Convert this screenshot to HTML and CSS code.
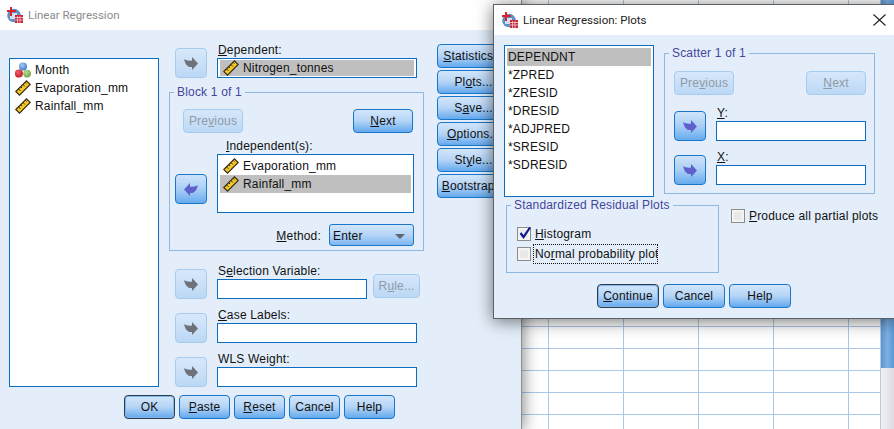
FILE: index.html
```html
<!DOCTYPE html>
<html lang="en">
<head>
  <meta charset="UTF-8">
  <title>Linear Regression</title>
  <link rel="stylesheet" href="styles.css">
</head>
<body>

  <svg class="defs" width="0" height="0">
    <defs>
      <radialGradient id="ball-blue" cx="40%" cy="35%" r="70%"><stop offset="0" stop-color="#a3cbf2"/><stop offset="1" stop-color="#3f7cc8"/></radialGradient>
      <radialGradient id="ball-red" cx="40%" cy="35%" r="70%"><stop offset="0" stop-color="#f0606a"/><stop offset="1" stop-color="#c01824"/></radialGradient>
      <radialGradient id="ball-green" cx="40%" cy="35%" r="70%"><stop offset="0" stop-color="#bcdc94"/><stop offset="1" stop-color="#6f9f44"/></radialGradient>
      <symbol id="i-ruler" viewBox="0 0 16 16">
        <path d="M.8 11.5 L11.5 .8 L15.2 4.5 L4.5 15.2 Z" fill="#f6c52a" stroke="#2f2a14" stroke-width="1.1"/>
        <path d="M3.6 9 L5.4 10.8 M5.8 6.8 L7 8 M8 4.6 L9.8 6.4 M10.2 2.4 L11.4 3.6" stroke="#2f2a14" stroke-width="1"/>
      </symbol>
      <symbol id="i-nominal" viewBox="0 0 16 16">
        <circle cx="8" cy="4.4" r="4" fill="url(#ball-blue)"/>
        <circle cx="3.9" cy="11.6" r="4" fill="url(#ball-red)"/>
        <circle cx="12.1" cy="11.6" r="3.9" fill="url(#ball-green)"/>
      </symbol>
      <symbol id="i-app" viewBox="0 0 16 16">
        <circle cx="7" cy="8.5" r="6.8" fill="#5c93c4"/>
        <path d="M3 6 H10 V12 H3 Z" fill="#cfe0f0"/>
        <path d="M3 0 H5 V3 H9 V5 H5 V9 H3 V5 H0 V3 H3 Z" fill="#d8232f"/>
        <rect x="8" y="8" width="8" height="8" fill="#c9283a"/>
        <path d="M8 10.5 H16 M8 13 H16 M10.5 9 V16 M13 9 V16" stroke="#f3c6cb" stroke-width=".8"/>
      </symbol>
      <symbol id="i-arrow" viewBox="0 0 14 13">
        <path d="M0 2 C2 3.5 5 4 8 3.5 V0 L14 6.5 L8 13 V10 C4.5 10.5 1.5 8.5 0 2 Z"/>
      </symbol>
      <symbol id="i-check" viewBox="0 0 14 14">
        <path d="M2.5 7 L5.5 11 L12 1.5" fill="none" stroke="#14148c" stroke-width="2.2"/>
      </symbol>
    </defs>
  </svg>

  <div class="sheet">
    <div class="sheet-grid"></div>
    <div class="scrollbar"><div class="scroll-thumb"></div></div>
  </div>

  <!-- main dialog -->
  <div class="window main-window">
    <div class="titlebar inactive">
      <svg class="app-icon"><use href="#i-app"/></svg>
      <span class="title-text">Linear Regression</span>
    </div>
    <div class="dialog-body">
      <div class="main-columns">
        <ul class="listbox source-list">
          <li><svg class="var-icon"><use href="#i-nominal"/></svg>Month</li>
          <li><svg class="var-icon"><use href="#i-ruler"/></svg>Evaporation_mm</li>
          <li><svg class="var-icon"><use href="#i-ruler"/></svg>Rainfall_mm</li>
        </ul>

        <div class="middle-col">
          <div class="var-row">
            <button class="arrow-btn" disabled><svg><use href="#i-arrow"/></svg></button>
            <div class="field wide">
              <label><u>D</u>ependent:</label>
              <div class="textbox"><div class="selected-var"><svg class="var-icon"><use href="#i-ruler"/></svg>Nitrogen_tonnes</div></div>
            </div>
          </div>

          <fieldset class="group block-group">
            <legend>Block 1 of 1</legend>
            <div class="pager">
              <button class="btn nav-btn" disabled>Pre<u>v</u>ious</button>
              <button class="btn nav-btn"><u>N</u>ext</button>
            </div>
            <div class="indep-row">
              <button class="arrow-btn active flip"><svg><use href="#i-arrow"/></svg></button>
              <div class="field">
                <label class="indep-label"><u>I</u>ndependent(s):</label>
                <ul class="listbox indep-list">
                  <li><svg class="var-icon"><use href="#i-ruler"/></svg>Evaporation_mm</li>
                  <li class="selected"><svg class="var-icon"><use href="#i-ruler"/></svg>Rainfall_mm</li>
                </ul>
              </div>
            </div>
            <div class="method-row">
              <label><u>M</u>ethod:</label>
              <div class="combo">Enter<span class="combo-caret"></span></div>
            </div>
          </fieldset>

          <div class="var-row first-lower">
            <button class="arrow-btn" disabled><svg><use href="#i-arrow"/></svg></button>
            <div class="field narrow">
              <label>S<u>e</u>lection Variable:</label>
              <div class="textbox"></div>
            </div>
            <button class="btn rule-btn" disabled>R<u>u</u>le...</button>
          </div>
          <div class="var-row lower">
            <button class="arrow-btn" disabled><svg><use href="#i-arrow"/></svg></button>
            <div class="field wide">
              <label><u>C</u>ase Labels:</label>
              <div class="textbox"></div>
            </div>
          </div>
          <div class="var-row lower">
            <button class="arrow-btn" disabled><svg><use href="#i-arrow"/></svg></button>
            <div class="field wide">
              <label>WLS Wei<u>g</u>ht:</label>
              <div class="textbox"></div>
            </div>
          </div>
        </div>

        <div class="side-buttons">
          <button class="btn side-btn"><u>S</u>tatistics...</button>
          <button class="btn side-btn">Pl<u>o</u>ts...</button>
          <button class="btn side-btn">S<u>a</u>ve...</button>
          <button class="btn side-btn"><u>O</u>ptions...</button>
          <button class="btn side-btn">St<u>y</u>le...</button>
          <button class="btn side-btn"><u>B</u>ootstrap...</button>
        </div>
      </div>

      <div class="main-actions">
        <button class="btn action-btn default">OK</button>
        <button class="btn action-btn"><u>P</u>aste</button>
        <button class="btn action-btn"><u>R</u>eset</button>
        <button class="btn action-btn">Cancel</button>
        <button class="btn action-btn">Help</button>
      </div>
    </div>
  </div>

  <!-- plots dialog -->
  <div class="window plots-window">
    <div class="titlebar">
      <svg class="app-icon"><use href="#i-app"/></svg>
      <span class="title-text">Linear Regression: Plots</span>
      <svg class="close-icon" viewBox="0 0 13 12"><path d="M.5 .5 L12.5 11.5 M12.5 .5 L.5 11.5" stroke="#222" stroke-width="1.1"/></svg>
    </div>
    <div class="dialog-body plots-body">
      <div class="plots-top">
        <ul class="listbox plots-list">
          <li class="selected">DEPENDNT</li>
          <li>*ZPRED</li>
          <li>*ZRESID</li>
          <li>*DRESID</li>
          <li>*ADJPRED</li>
          <li>*SRESID</li>
          <li>*SDRESID</li>
        </ul>
        <fieldset class="group scatter-group">
          <legend>Scatter 1 of 1</legend>
          <div class="pager">
            <button class="btn nav-btn" disabled>Pre<u>v</u>ious</button>
            <button class="btn nav-btn" disabled><u>N</u>ext</button>
          </div>
          <div class="var-row scatter-first">
            <button class="arrow-btn active"><svg><use href="#i-arrow"/></svg></button>
            <div class="field narrow">
              <label><u>Y</u>:</label>
              <div class="textbox"></div>
            </div>
          </div>
          <div class="var-row lower">
            <button class="arrow-btn active"><svg><use href="#i-arrow"/></svg></button>
            <div class="field narrow">
              <label><u>X</u>:</label>
              <div class="textbox"></div>
            </div>
          </div>
        </fieldset>
      </div>

      <div class="plots-middle">
        <fieldset class="group std-group">
          <legend>Standardized Residual Plots</legend>
          <div class="check-row">
            <span class="checkbox"><svg><use href="#i-check"/></svg></span>
            <span class="check-label"><u>H</u>istogram</span>
          </div>
          <div class="check-row">
            <span class="checkbox"></span>
            <span class="check-label focused">No<u>r</u>mal probability plot</span>
          </div>
        </fieldset>
        <div class="check-row partial-row">
          <span class="checkbox"></span>
          <span class="check-label"><u>P</u>roduce all partial plots</span>
        </div>
      </div>

      <div class="plots-actions">
        <button class="btn plot-btn default"><u>C</u>ontinue</button>
        <button class="btn plot-btn">Cancel</button>
        <button class="btn plot-btn">Help</button>
      </div>
    </div>
  </div>

</body>
</html>
```

FILE: styles.css
```css
* {
  box-sizing: border-box;
}

body {
  margin: 0;
  height: 429px;
  width: 894px;
  overflow: hidden;
  position: relative;
  background: #fff;
  font-family: "Liberation Sans", Arial, sans-serif;
  font-size: 12px;
  line-height: 14px;
  letter-spacing: 0.18px;
  color: #111;
}

.defs {
  position: absolute;
}

/* spreadsheet behind the dialogs */
.sheet {
  position: absolute;
  left: 522px;
  top: 0;
  right: 0;
  bottom: 0;
  display: flex;
}

.sheet-grid {
  flex: 1;
  background-color: #fff;
  background-image:
    linear-gradient(to right, #a9c8e6 1px, transparent 1px),
    linear-gradient(to bottom, #a9c8e6 1px, transparent 1px);
  background-size: 75px 100%, 100% 22px;
  background-position: 26px 0, 0 18px;
}

.scrollbar {
  width: 14px;
  background: linear-gradient(to right, #f1f1f4, #dcdce2);
  border-left: 1px solid #b9c9da;
}

.scroll-thumb {
  height: 368px;
  background: linear-gradient(to right, #5b98d6, #7fb0e0 50%, #5b98d6);
}

/* windows */
.window {
  position: absolute;
  display: flex;
  flex-direction: column;
  box-shadow: 0 2px 16px rgba(0, 0, 0, 0.55);
}

.main-window {
  left: 0;
  top: 0;
  width: 522px;
  height: 429px;
  border-right: 1px solid #8b8f94;
}

.plots-window {
  left: 493px;
  top: 4px;
  width: 402px;
  height: 315px;
  border: 1px solid #5b6066;
}

.titlebar {
  height: 30px;
  flex: none;
  display: flex;
  align-items: center;
  padding-left: 8px;
  background: #fff;
  color: #222;
}

.titlebar.inactive {
  color: #8c8c8c;
  padding-left: 7px;
}

.app-icon {
  width: 16px;
  height: 16px;
  margin-right: 5px;
}

.title-text {
  flex: 1;
  font-family: Roboto, "Liberation Sans", sans-serif;
  font-size: 11.5px;
  letter-spacing: 0;
}

.close-icon {
  width: 13px;
  height: 12px;
  margin-right: 8px;
}

.dialog-body {
  flex: 1;
  background: #e3eefa;
}

/* shared controls */
.listbox {
  margin: 0;
  padding: 2px;
  list-style: none;
  background: #fff;
  border: 1px solid #0b6cc0;
}

.listbox li {
  height: 18px;
  display: flex;
  align-items: center;
  white-space: nowrap;
}

.listbox li.selected {
  background: #bfbfbf;
}

.var-icon {
  width: 16px;
  height: 16px;
  margin: 0 4px 0 3px;
  flex: none;
}

.textbox {
  height: 20px;
  background: #fff;
  border: 1px solid #0b6cc0;
}

.selected-var {
  margin: 1px 2px;
  height: 16px;
  background: #bfbfbf;
  display: flex;
  align-items: center;
}

.btn {
  height: 24px;
  padding: 0;
  font: inherit;
  letter-spacing: inherit;
  color: #111;
  border: 1px solid #1a76c8;
  border-radius: 4px;
  background: linear-gradient(to bottom, #d3e6fb, #b4d4f6 50%, #63a9ee);
  white-space: nowrap;
}

.btn:disabled {
  color: #8f9aa6;
  border-color: #a5cbee;
  background: linear-gradient(to bottom, #d6e7fa, #bcd8f5);
}

.btn.default {
  border-color: #2c3e50;
  box-shadow: inset 0 0 0 1px #7fb6ee;
}

.arrow-btn {
  width: 32px;
  height: 30px;
  flex: none;
  padding: 0;
  display: flex;
  align-items: center;
  justify-content: center;
  fill: #6e7178;
  border: 1px solid #a5cbee;
  border-radius: 4px;
  background: linear-gradient(to bottom, #d8e8fa, #bcd8f5);
}

.arrow-btn svg {
  width: 14px;
  height: 13px;
}

.arrow-btn.active {
  fill: #6060cc;
  border-color: #1a76c8;
  background: linear-gradient(to bottom, #cfe3fa, #a9cff5 50%, #66abee);
}

.arrow-btn.flip svg {
  transform: scaleX(-1);
}

.group {
  margin: 0;
  padding: 0;
  min-width: 0;
  border: 1px solid #8fb8e0;
}

.group legend {
  margin-left: 4px;
  padding: 0 3px;
  color: #45459c;
}

.var-row {
  display: flex;
  align-items: flex-end;
}

.field {
  margin-left: 10px;
  display: flex;
  flex-direction: column;
}

.field label {
  height: 14px;
  line-height: 12px;
  padding-left: 1px;
}

.field.wide {
  width: 200px;
}

.field.narrow {
  width: 150px;
}

.pager {
  display: flex;
  justify-content: space-between;
}

.nav-btn {
  width: 60px;
}

/* main dialog */
.main-columns {
  display: flex;
  padding: 14px 0 0 9px;
  height: 357px;
}

.source-list {
  width: 150px;
  height: 329px;
  margin-top: 14px;
  flex: none;
}

.middle-col {
  width: 255px;
  margin-left: 10px;
  flex: none;
}

.middle-col > .var-row {
  padding-left: 6px;
}

.block-group {
  margin-top: 7px;
  height: 166px;
}

.block-group .pager {
  padding: 10px 10px 0 13px;
}

.indep-row {
  display: flex;
  margin-top: 6px;
  padding-left: 5px;
}

.indep-row .arrow-btn {
  margin-top: 35px;
}

.indep-label.indep-label {
  padding-left: 9px;
  height: 15px;
  line-height: 14px;
}

.indep-list {
  width: 197px;
  height: 59px;
}

.method-row {
  display: flex;
  align-items: center;
  justify-content: flex-end;
  margin-top: 11px;
  padding-right: 9px;
}

.method-row label {
  margin-right: 8px;
  padding-top: 2px;
}

.combo {
  width: 85px;
  height: 22px;
  padding: 2px 3px 0;
  display: flex;
  align-items: center;
  justify-content: space-between;
  border: 1px solid #1a76c8;
  border-radius: 3px;
  background: linear-gradient(to bottom, #d3e6fb, #b4d4f6 50%, #7db6f0);
}

.combo-caret {
  margin-right: 5px;
  border-left: 5px solid transparent;
  border-right: 5px solid transparent;
  border-top: 5px solid #5f6670;
}

.first-lower {
  margin-top: 14px;
}

.lower {
  margin-top: 10px;
}

.rule-btn {
  width: 47px;
  margin: 0 0 1px 6px;
}

.side-buttons {
  margin-left: 13px;
  display: flex;
  flex-direction: column;
  gap: 2px;
}

.side-btn {
  width: 73px;
}

.main-actions {
  display: flex;
  gap: 4px;
  padding: 8px 0 0 124px;
}

.action-btn {
  width: 51px;
}

/* plots dialog */
.plots-top {
  display: flex;
  padding: 10px 0 0 10px;
}

.plots-list {
  width: 150px;
  height: 152px;
  flex: none;
}

.plots-list li {
  padding-left: 1px;
}

.scatter-group {
  width: 211px;
  height: 148px;
  margin: 1px 0 0 10px;
}

.scatter-group .pager {
  padding: 11px 8px 0 9px;
}

.scatter-group .var-row {
  padding-left: 9px;
}

.scatter-first {
  margin-top: 12px;
}

.plots-middle {
  display: flex;
  align-items: flex-start;
  padding: 1px 0 0 12px;
}

.std-group {
  width: 213px;
  height: 75px;
  padding: 12px 0 0 10px;
}

.std-group legend {
  margin-left: -6px;
}

.check-row {
  display: flex;
  align-items: center;
  height: 20px;
}

.checkbox {
  width: 14px;
  height: 14px;
  flex: none;
  border: 1px solid #8d8d8d;
  background: #e9e9e9;
  box-shadow: inset 0 0 0 2px #f4f4f4;
}

.checkbox svg {
  display: block;
  width: 14px;
  height: 14px;
  margin: -2px 0 0 0;
}

.check-label {
  margin-left: 2px;
  padding: 2px 1px;
  line-height: 14px;
  border: 1px dotted transparent;
  white-space: nowrap;
}

.check-label.focused {
  width: 125px;
  overflow: hidden;
  border-color: #111;
}

.partial-row {
  margin: 8px 0 0 12px;
}

.plots-actions {
  display: flex;
  gap: 4px;
  padding: 11px 0 0 103px;
}

.plot-btn {
  width: 62px;
}
```
